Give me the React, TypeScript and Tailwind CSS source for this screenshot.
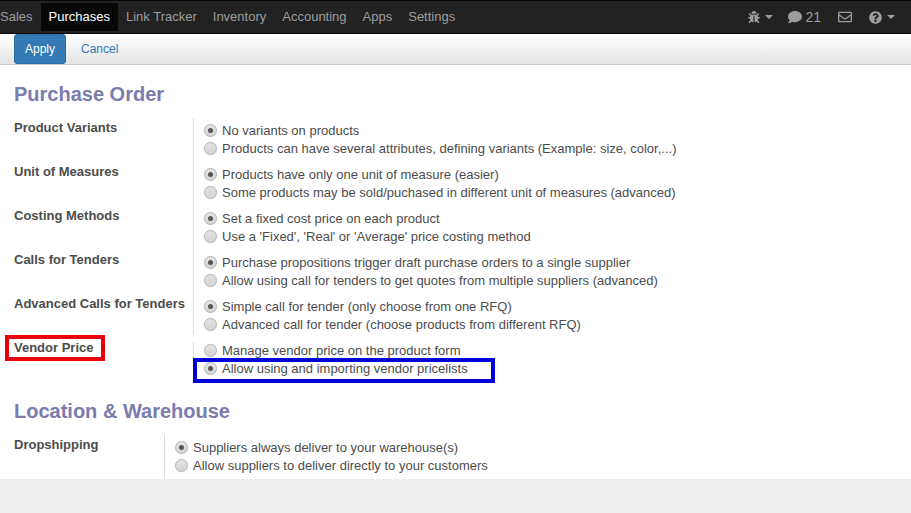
import React from "react";
import { FaBug, FaComment, FaRegEnvelope, FaQuestionCircle } from "react-icons/fa";

const menus = ["Sales", "Purchases", "Link Tracker", "Inventory", "Accounting", "Apps", "Settings"];

const Caret: React.FC = () => (
  <span className="ml-[5px] inline-block h-0 w-0 border-x-4 border-t-4 border-x-transparent border-t-[#9d9d9d]"></span>
);

const Radio: React.FC<{ checked?: boolean; text: string }> = ({ checked, text }) => (
  <label className="flex h-[18px] items-center">
    <span className="mt-[-1px] mr-[5px] flex h-[13px] w-[13px] items-center justify-center rounded-full border border-[#b5b5b5] bg-gradient-to-b from-[#e4e4e4] to-[#d4d4d4] shadow-[0_0_1px_#ccc]">
      {checked && <span className="h-[5px] w-[5px] rounded-full bg-[#555]"></span>}
    </span>
    <span>{text}</span>
  </label>
);

const Row: React.FC<{ label: string; a: string; b: string; aOff?: boolean; last?: boolean }> = ({ label, a, b, aOff, last }) => (
  <div className={last ? "mb-2 flex" : "flex"}>
    <div className="mt-[-3px] w-[179px] shrink-0 font-bold leading-[18px]">{label}</div>
    <div className={last ? "border-l border-[#ddd] pl-[10px]" : "border-l border-[#ddd] pb-2 pl-[10px]"}>
      <Radio checked={!aOff} text={a} />
      <Radio checked={aOff} text={b} />
    </div>
  </div>
);

export default function App() {
  return (
    <div className="flex h-[513px] w-[911px] flex-col overflow-hidden bg-[#efeeee] font-['Liberation_Sans',sans-serif] text-[13px] text-[#4c4c4c]">
      <nav className="flex h-[34px] shrink-0 items-center justify-between border-y border-y-[#080808] bg-[#222] text-[#9d9d9d]">
        <div className="ml-[-8px] flex items-center">
          {menus.map((m) => (
            <a
              key={m}
              className={
                m === "Purchases"
                  ? "flex h-[28px] items-center bg-[#080808] px-2 text-white"
                  : "flex h-[28px] items-center px-2"
              }
            >
              {m}
            </a>
          ))}
        </div>
        <div className="mr-4 flex items-center text-[14px]">
          <FaBug className="mt-[-1px] text-[12px]" />
          <Caret />
          <FaComment className="ml-[15px] text-[14px]" />
          <span className="ml-[3px]">21</span>
          <FaRegEnvelope className="ml-[17px] text-[14px]" />
          <FaQuestionCircle className="ml-[17px] text-[13px]" />
          <Caret />
        </div>
      </nav>

      <div className="flex h-[31px] shrink-0 items-center border-b border-[#ccc] bg-gradient-to-b from-white to-[#e4e4e4] pl-[14px]">
        <button className="h-[30px] w-[52px] rounded-[3px] border border-[#2e6da4] bg-[#337ab7] text-[12px] text-white">
          Apply
        </button>
        <a className="ml-[15px] text-[12px] text-[#337ab7]">Cancel</a>
      </div>

      <main className="h-[414px] shrink-0 overflow-hidden bg-white pl-[14px]">
        <h1 className="mt-[17px] text-[20px] font-bold leading-[25px] text-[#7c7bad]">Purchase Order</h1>
        <div className="mt-[11px] flex flex-col">
          <div className="flex">
            <div className="w-[179px] shrink-0"></div>
            <div className="h-[4px] border-l border-[#ddd]"></div>
          </div>
          <Row
            label="Product Variants"
            a="No variants on products"
            b="Products can have several attributes, defining variants (Example: size, color,...)"
          />
          <Row
            label="Unit of Measures"
            a="Products have only one unit of measure (easier)"
            b="Some products may be sold/puchased in different unit of measures (advanced)"
          />
          <Row
            label="Costing Methods"
            a="Set a fixed cost price on each product"
            b="Use a 'Fixed', 'Real' or 'Average' price costing method"
          />
          <Row
            label="Calls for Tenders"
            a="Purchase propositions trigger draft purchase orders to a single supplier"
            b="Allow using call for tenders to get quotes from multiple suppliers (advanced)"
          />
          <Row
            label="Advanced Calls for Tenders"
            a="Simple call for tender (only choose from one RFQ)"
            b="Advanced call for tender (choose products from different RFQ)"
            last
          />
          <div className="relative">
            <Row
              label="Vendor Price"
              a="Manage vendor price on the product form"
              b="Allow using and importing vendor pricelists"
              aOff
              last
            />
            <div className="absolute top-[-7px] left-[-9px] h-[26px] w-[100px] border-4 border-[#e8000d]"></div>
            <div className="absolute top-[16px] left-[179px] h-[25px] w-[302px] border-4 border-[#0000d8]"></div>
          </div>
        </div>
        <h1 className="mt-[13px] text-[20px] font-bold leading-[25px] text-[#7c7bad]">Location &amp; Warehouse</h1>
        <div className="mt-[11px] flex">
          <div className="mt-px w-[150px] shrink-0 font-bold leading-[18px]">Dropshipping</div>
          <div className="h-[50px] border-l border-[#ddd] pt-1 pl-[10px]">
            <Radio checked text="Suppliers always deliver to your warehouse(s)" />
            <Radio text="Allow suppliers to deliver directly to your customers" />
          </div>
        </div>
      </main>
    </div>
  );
}
